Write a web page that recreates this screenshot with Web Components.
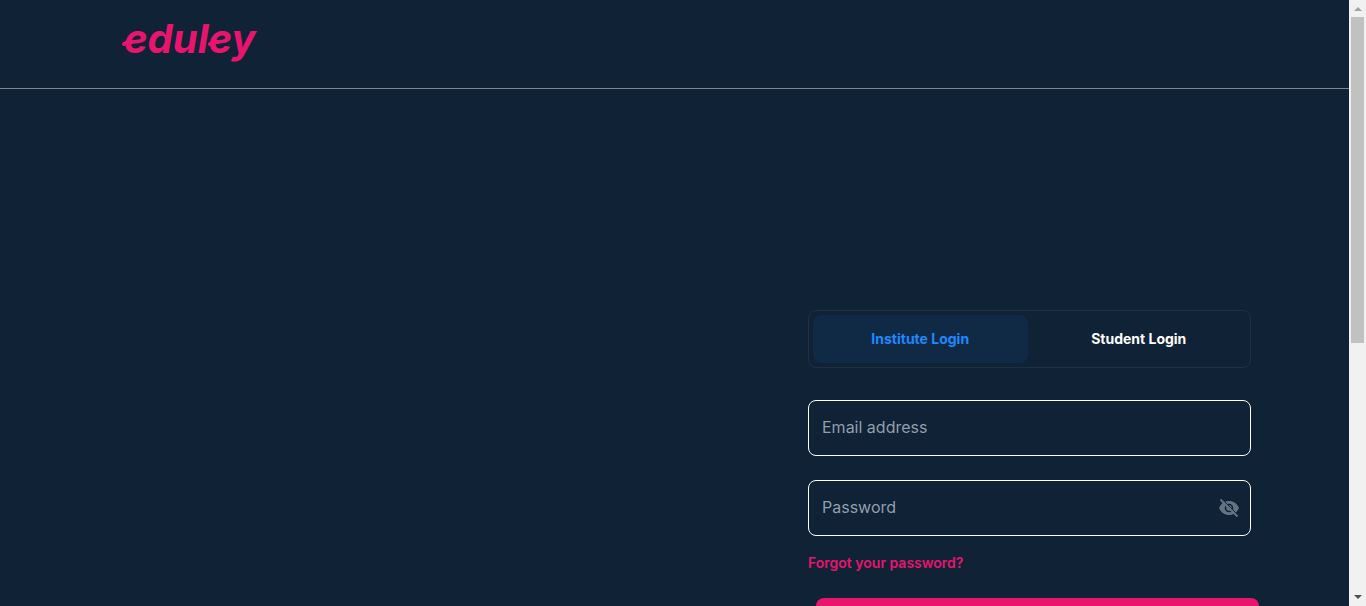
<!DOCTYPE html>
<html lang="en">
<head>
<meta charset="utf-8">
<title>Eduley Login</title>
<style>
body{margin:0;font-family:Inter,"Liberation Sans",sans-serif;background:#102236;color:#fff}
</style>
</head>
<body>
<login-page></login-page>
<script>
const define = (name, html, setup) => customElements.define(name, class extends HTMLElement {
  constructor() {
    super();
    this.attachShadow({ mode: 'open' }).innerHTML = '<style>*{box-sizing:border-box}</style>' + html(this);
    if (setup) setup(this, this.shadowRoot);
  }
});

define('brand-logo', () => `
<style>
:host{display:block}
a{display:inline-block;position:relative;padding-left:2px;color:#e8146e;text-decoration:none;font:italic 700 40px/44px Inter,sans-serif}
svg{position:absolute;left:0;top:0;width:136px;height:44px;overflow:visible}
</style>
<a href="#">eduley<svg viewBox="0 0 136 44" aria-hidden="true" fill="none" stroke="#e8146e" stroke-width="4" stroke-linecap="round"><path d="M2 27q4-3 8-2M88 27q4-3 8-2"/></svg></a>`);

define('site-header', () => `
<style>
:host{display:block;height:89px;padding:17px 122px 0;border-bottom:1px solid #7c858f}
</style>
<brand-logo></brand-logo>`);

define('login-tabs', () => `
<style>
:host{display:block;height:58px;padding:4px;border:1px solid #1d3044;border-radius:8px}
div{display:flex;height:100%;gap:4px}
button{flex:1;padding:0;border:0;border-radius:8px;background:none;color:#fff;font:700 14px/24px Inter,sans-serif;cursor:pointer}
button[aria-selected=true]{background:#102a45;color:#1e88ff}
</style>
<div role="tablist"><button role="tab" aria-selected="true">Institute Login</button><button role="tab" aria-selected="false">Student Login</button></div>`,
(el, root) => {
  const tabs = root.querySelectorAll('button');
  tabs.forEach(t => t.addEventListener('click', () => tabs.forEach(o => o.setAttribute('aria-selected', o === t))));
});

define('text-field', el => `
<style>
:host{display:flex;align-items:center;height:56px;padding:0 10px 0 13px;border:1px solid #fff;border-radius:8px}
input{flex:1;min-width:0;height:52px;padding:0 0 2px;border:0;outline:0;background:none;color:#fff;font:400 16px/24px Inter,sans-serif}
input::placeholder{color:#919eab;opacity:1}
</style>
<input type="${el.getAttribute('type')}" aria-label="${el.getAttribute('label')}" placeholder="${el.getAttribute('label')}"><slot></slot>`);

define('visibility-toggle', () => `
<style>
:host{display:block}
button{display:block;padding:0;border:0;background:none;color:#637381;cursor:pointer}
svg{display:block;width:22px;height:22px}
</style>
<button aria-label="Show password"><svg viewBox="0 0 22 22" fill="none" stroke="currentColor"><path d="M1 11c2-4.500 5.500-7 10-7s8 2.500 10 7c-2 4.500-5.500 7-10 7S3 15.500 1 11z" fill="currentColor" stroke="none"/><circle cx="11" cy="11" r="3.500" stroke="#102236" stroke-width="1.500"/><path d="M3.500 1.500l17 17" stroke="#102236" stroke-width="1"/><path d="M2.500 2.500l17 17" stroke-width="2"/></svg></button>`);

define('login-form', () => `
<style>
:host{display:block;width:443px;max-width:100%}
form{display:flex;flex-direction:column;margin:0}
login-tabs{margin-bottom:32px}
text-field{margin-bottom:24px}
text-field.last{margin-bottom:16px}
a{align-self:flex-start;color:#e8146e;font-size:14px;font-weight:600;line-height:22px;text-decoration:none}
.submit{width:100%;height:48px;margin:24px 0 0 8px;border:0;border-radius:8px;background:#e8146e}
</style>
<form>
<login-tabs></login-tabs>
<text-field type="email" label="Email address"></text-field>
<text-field class="last" type="password" label="Password"><visibility-toggle></visibility-toggle></text-field>
<a href="#">Forgot your password?</a>
<button class="submit" type="button" aria-label="Login"></button>
</form>`);

define('scroll-rail', () => `
<style>
:host{display:flex;flex-direction:column;width:17px;background:#f1f1f1}
svg{display:block;width:17px;height:17px;flex:none}
.track{flex:1;padding:0 2px}
.thumb{height:57%;background:#c1c1c1}
</style>
<svg viewBox="0 0 17 17" aria-hidden="true"><path d="M5 11l4-4 4 4z" fill="#a3a3a3"/></svg>
<div class="track"><div class="thumb"></div></div>
<svg viewBox="0 0 17 17" aria-hidden="true"><path d="M5 6l4 4 4-4z" fill="#505050"/></svg>`);

define('login-page', () => `
<style>
:host{display:flex;height:100vh;overflow:hidden}
.view{flex:1;min-width:0;overflow:hidden}
main{display:flex;justify-content:flex-end;padding:221px 98px 0 122px}
</style>
<div class="view"><site-header></site-header><main><login-form></login-form></main></div>
<scroll-rail></scroll-rail>`);
</script>
</body>
</html>
